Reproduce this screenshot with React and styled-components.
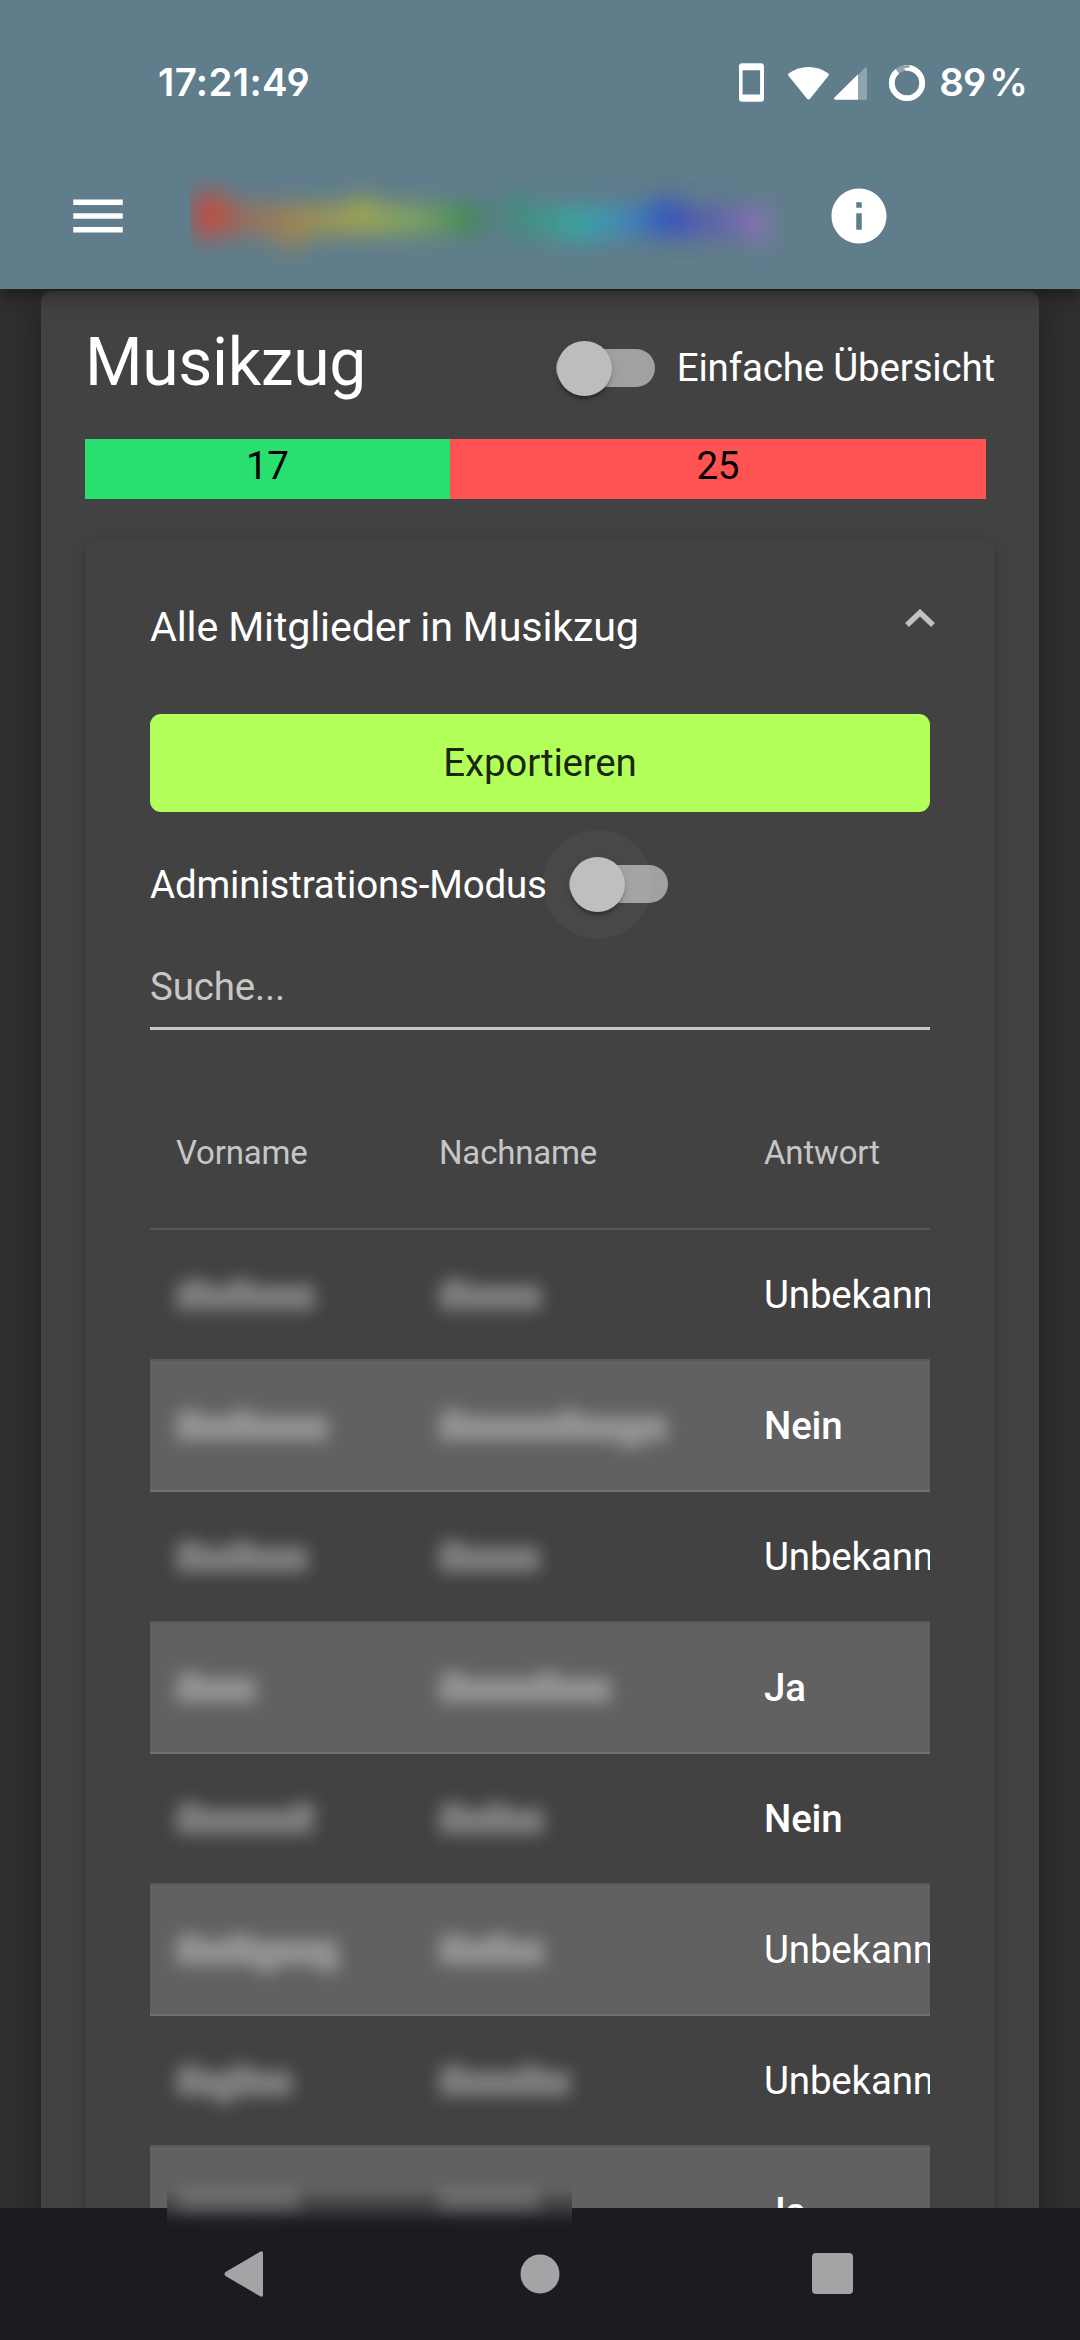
import React from "react";
import styled, { createGlobalStyle, css } from "styled-components";

const GlobalStyle = createGlobalStyle`
  * { box-sizing: border-box; }
  html, body { margin: 0; padding: 0; background: #303030; }
  body { font-family: Roboto, "Noto Sans", sans-serif; color: #fff; letter-spacing: -0.17px; }
`;

const Screen = styled.div`
  width: 1080px;
  height: 2340px;
  display: flex;
  flex-direction: column;
  overflow: hidden;
  background: #303030;
`;

const AppBar = styled.header`
  position: relative;
  z-index: 2;
  flex: none;
  height: 289px;
  background: #607d8b;
  box-shadow:
    0 5.5px 11px -2.75px rgba(0, 0, 0, 0.2),
    0 11px 13.75px 0 rgba(0, 0, 0, 0.14),
    0 2.75px 27.5px 0 rgba(0, 0, 0, 0.12);
`;

const StatusBar = styled.div`
  height: 135px;
  padding: 28px 53px 0 158px;
  display: flex;
  align-items: center;
  justify-content: space-between;
`;

const StatusText = styled.span`
  font-family: Inter, Roboto, sans-serif;
  font-size: 38.5px;
  font-weight: 600;
  line-height: 48px;
  letter-spacing: ${(p) => p.$spacing}px;
  word-spacing: -4.5px;
  font-feature-settings: "cv04" 1;
  white-space: pre;
`;

const StatusIcons = styled.div`
  display: flex;
  align-items: center;
`;

const StatusSvg = styled.svg`
  display: block;
  margin-right: 13px;
`;

const Toolbar = styled.div`
  height: 154px;
  padding: 7px 188px 0 65px;
  display: flex;
  align-items: center;
`;

const ToolbarIcon = styled.svg`
  display: block;
  flex: none;
  width: 66px;
  height: 66px;
  fill: #fff;
`;

const BlurredTitle = styled.svg`
  display: block;
  flex: none;
  margin: 0 36px 0 59px;
  width: 600px;
  height: 110px;
`;

const Content = styled.main`
  flex: 1;
  min-height: 0;
  padding: 2px 41px 0;
  overflow: hidden;
`;

const Card = styled.section`
  height: 2100px;
  padding: 0 44px;
  border-radius: 11px;
  background: #424242;
  box-shadow:
    0 13.75px 13.75px -8.25px rgba(0, 0, 0, 0.2),
    0 22px 27.5px 2.75px rgba(0, 0, 0, 0.14),
    0 8.25px 38.5px 5.5px rgba(0, 0, 0, 0.12);
`;

const CardHeader = styled.div`
  height: 148px;
  padding-top: 28px;
  display: flex;
  justify-content: space-between;
  align-items: flex-start;
`;

const Title = styled.h1`
  margin: 0;
  font-size: 66px;
  line-height: 87px;
  font-weight: 400;
  letter-spacing: -0.35px;
`;

const SwitchLabel = styled.label`
  display: flex;
  align-items: center;
  gap: 22px;
  height: 55px;
  font-size: 38.5px;
  line-height: 55px;
  white-space: nowrap;
  ${(p) =>
    p.$offset &&
    css`
      margin-top: ${p.$offset}px;
    `}
`;

const Track = styled.span`
  position: relative;
  flex: none;
  width: 99px;
  height: 38px;
  border-radius: 19px;
  background: #a1a1a1;
`;

const Thumb = styled.span`
  position: absolute;
  left: 1px;
  top: -8px;
  width: 55px;
  height: 55px;
  border-radius: 50%;
  background: #bdbdbd;
  box-shadow:
    0 5.5px 2.75px -2.75px rgba(0, 0, 0, 0.2),
    0 2.75px 2.75px 0 rgba(0, 0, 0, 0.14),
    0 2.75px 8.25px 0 rgba(0, 0, 0, 0.12);
`;

const Ripple = styled.span`
  position: absolute;
  left: -26px;
  top: -35px;
  width: 109px;
  height: 109px;
  border-radius: 50%;
  background: rgba(255, 255, 255, 0.035);
`;

const RatioBar = styled.div`
  display: flex;
  width: 901px;
  height: 60px;
`;

const RatioPart = styled.div`
  flex: ${(p) => p.$count} 0 0;
  background: ${(p) => p.$color};
  color: #000;
  font-size: 38.5px;
  line-height: 54px;
  text-align: center;
`;

const Panel = styled.section`
  height: 1800px;
  margin-top: 41px;
  border-radius: 11px;
  background: #424242;
  box-shadow:
    0 8.25px 2.75px -5.5px rgba(0, 0, 0, 0.2),
    0 5.5px 5.5px 0 rgba(0, 0, 0, 0.14),
    0 2.75px 13.75px 0 rgba(0, 0, 0, 0.12);
`;

const PanelHeader = styled.div`
  height: 174px;
  padding: 0 60px 0 65px;
  display: flex;
  justify-content: space-between;
  align-items: center;
  font-size: 41.25px;
`;

const Chevron = styled.svg`
  display: block;
  margin-bottom: 18px;
`;

const PanelBody = styled.div`
  padding: 0 65px;
`;

const ExportButton = styled.button`
  display: block;
  width: 100%;
  height: 98px;
  padding: 0;
  border: 0;
  border-radius: 11px;
  background: #b2ff59;
  color: rgba(0, 0, 0, 0.87);
  font: 400 38.5px/98px Roboto, sans-serif;
  letter-spacing: inherit;
`;

const AdminRow = styled.div`
  height: 110px;
  margin-top: 17px;
  display: flex;
  align-items: center;
`;

const SearchField = styled.div`
  height: 91px;
  padding-top: 20px;
  border-bottom: 3px solid #c6c6c6;
  color: #c6c6c6;
  font-size: 38.5px;
  line-height: 56px;
`;

const Table = styled.div`
  margin-top: 46px;
  overflow: hidden;
`;

const Row = styled.div`
  display: grid;
  grid-template-columns: 263px 325px 1fr;
  align-items: center;
  height: 131px;
  padding-left: 26px;
  border-bottom: 2px solid ${(p) => (p.$alt ? "#717171" : "#585858")};
  background: ${(p) => (p.$alt ? "#616161" : "transparent")};
`;

const HeadRow = styled(Row)`
  height: 154px;
  color: #c6c6c6;
  font-size: 33px;
`;

const Answer = styled.span`
  min-width: 0;
  font-size: 38.5px;
  font-weight: ${(p) => (p.$strong ? 500 : 400)};
  white-space: nowrap;
`;

const BlurredSvg = styled.svg`
  display: block;
  overflow: visible;
`;

const NavBar = styled.nav`
  position: relative;
  z-index: 2;
  flex: none;
  height: 132px;
  padding: 0 223px;
  display: flex;
  align-items: center;
  justify-content: space-between;
  background: #1c1b20;
`;

const EdgeSmudge = styled.svg`
  position: absolute;
  left: 167px;
  top: -30px;
`;

/* Unreadable name: a soft band with optional lumps above (up) and below (down). */
function BlurredName({ width, up = [], down = [] }) {
  return (
    <BlurredSvg width={width} height="60" fill="#fff">
      <g filter="url(#soft)" opacity="0.31">
        <rect x="0" y="20" width={width} height="25" rx="4" />
        {up.map((x) => (
          <rect key={"u" + x} x={x - 11} y="14" width="22" height="16" />
        ))}
        {down.map((x) => (
          <rect key={"d" + x} x={x - 11} y="40" width="22" height="12" />
        ))}
      </g>
    </BlurredSvg>
  );
}

function Switch({ ripple }) {
  return (
    <Track>
      <Thumb />
      {ripple && <Ripple />}
    </Track>
  );
}

const rows = [
  { first: { width: 139, up: [20, 65] }, last: { width: 102, up: [16] }, answer: "Unbekannt" },
  { first: { width: 152, up: [14, 66] }, last: { width: 228, up: [14, 130], down: [192] }, answer: "Nein" },
  { first: { width: 132, up: [14, 66] }, last: { width: 101, up: [14] }, answer: "Unbekannt" },
  { first: { width: 80, up: [14] }, last: { width: 172, up: [14, 108] }, answer: "Ja" },
  { first: { width: 137, up: [14, 128] }, last: { width: 105, up: [14, 58] }, answer: "Nein" },
  { first: { width: 162, up: [14, 64], down: [90, 152] }, last: { width: 105, up: [14, 58] }, answer: "Unbekannt" },
  { first: { width: 116, up: [14, 66], down: [48] }, last: { width: 131, up: [14, 92] }, answer: "Unbekannt" },
  { answer: "Ja" },
];

const titleStops = [
  ["0.02", "#c8453c"],
  ["0.1", "#b06a48"],
  ["0.19", "#b8923c"],
  ["0.29", "#b4b43c"],
  ["0.37", "#8cb450"],
  ["0.48", "#2f8a48"],
  ["0.56", "#329a80"],
  ["0.65", "#2fb0a8"],
  ["0.71", "#2f98cc"],
  ["0.8", "#3048c8"],
  ["0.88", "#6058b8"],
  ["0.96", "#9a74b8"],
];

function TitleBlur() {
  return (
    <BlurredTitle viewBox="0 0 600 110">
      <defs>
        <linearGradient id="rainbow" gradientUnits="userSpaceOnUse" x1="0" x2="600" y1="0" y2="0">
          {titleStops.map(([offset, color]) => (
            <stop key={offset} offset={offset} stopColor={color} />
          ))}
        </linearGradient>
        <filter id="softTitle" x="-10%" y="-50%" width="120%" height="200%">
          <feGaussianBlur stdDeviation="11" />
        </filter>
      </defs>
      <g filter="url(#softTitle)" fill="url(#rainbow)" opacity="0.9">
        <rect x="4" y="32" width="34" height="44" />
        <rect x="38" y="43" width="254" height="31" opacity="0.75" />
        <rect x="84" y="64" width="34" height="26" opacity="0.5" />
        <rect x="158" y="34" width="26" height="22" opacity="0.55" />
        <rect x="268" y="44" width="22" height="28" opacity="0.6" />
        <rect x="310" y="36" width="36" height="40" opacity="0.62" />
        <rect x="346" y="45" width="230" height="31" opacity="0.77" />
        <rect x="366" y="52" width="42" height="32" opacity="0.5" />
        <rect x="460" y="36" width="32" height="36" opacity="0.7" />
        <rect x="554" y="46" width="26" height="38" opacity="0.6" />
      </g>
    </BlurredTitle>
  );
}

export default function App() {
  return (
    <Screen>
      <GlobalStyle />
      <AppBar>
        <StatusBar>
          <StatusText $spacing={0.35}>17:21:49</StatusText>
          <StatusIcons>
            <StatusSvg width="188" height="40" viewBox="738 62 188 40">
              <path
                fill="#fff"
                fillRule="evenodd"
                d="M742 63.3h19a3 3 0 0 1 3 3v32.4a3 3 0 0 1-3 3h-19a3 3 0 0 1-3-3V66.300a3 3 0 0 1 3-3ZM742.600 70.300v24.200h17.500V70.300Z"
              />
              <path
                fill="#fff"
                d="M788.500 75.800Q787.500 74.300 789 73.200C795 69 801.500 67 808.500 67s13.500 2 19.500 6.200q1.500 1.100.5 2.600L810 98.800q-1.500 1.600-3 0Z"
              />
              <path fill="#fff" fillOpacity="0.3" d="M865 67.500q2-1 2 1.300V98.500q0 1.300-1.300 1.300H858V75Z" />
              <path fill="#fff" d="M858 74.300v25.500H835.500q-2.500-.3-1-2.200Z" />
              <circle cx="907" cy="83" r="15.200" fill="none" stroke="#fff" strokeOpacity="0.3" strokeWidth="5.800" />
              <circle
                cx="907"
                cy="83"
                r="15.200"
                fill="none"
                stroke="#fff"
                strokeWidth="5.800"
                pathLength="100"
                strokeDasharray="89 11"
                transform="rotate(-90 907 83)"
              />
            </StatusSvg>
            <StatusText $spacing={-1}>89 %</StatusText>
          </StatusIcons>
        </StatusBar>
        <Toolbar>
          <ToolbarIcon viewBox="0 0 24 24">
            <path d="M3 18h18v-2H3v2zm0-5h18v-2H3v2zm0-7v2h18V6H3z" />
          </ToolbarIcon>
          <TitleBlur />
          <ToolbarIcon viewBox="0 0 24 24">
            <path d="M12 2C6.480 2 2 6.480 2 12s4.480 10 10 10 10-4.480 10-10S17.520 2 12 2zm1 15h-2v-6h2v6zm0-8h-2V7h2v2z" />
          </ToolbarIcon>
        </Toolbar>
      </AppBar>

      <Content>
        <Card>
          <CardHeader>
            <Title>Musikzug</Title>
            <SwitchLabel $offset={21}>
              <Switch />
              Einfache Übersicht
            </SwitchLabel>
          </CardHeader>
          <RatioBar>
            <RatioPart $count={17} $color="#28df70">17</RatioPart>
            <RatioPart $count={25} $color="#ff5252">25</RatioPart>
          </RatioBar>

          <Panel>
            <PanelHeader>
              <span>Alle Mitglieder in Musikzug</span>
              <Chevron width="30" height="18" viewBox="0 0 30 18" fill="none" stroke="#c1c1c1" strokeWidth="5.500">
                <path d="M2 16 15 3.700 28 16" />
              </Chevron>
            </PanelHeader>
            <PanelBody>
              <ExportButton>Exportieren</ExportButton>
              <AdminRow>
                <SwitchLabel>
                  Administrations-Modus
                  <Switch ripple />
                </SwitchLabel>
              </AdminRow>
              <SearchField>Suche...</SearchField>
              <Table>
                <HeadRow>
                  <span>Vorname</span>
                  <span>Nachname</span>
                  <span>Antwort</span>
                </HeadRow>
                {rows.map((row, i) => (
                  <Row key={i} $alt={i % 2 === 1}>
                    {row.first ? <BlurredName {...row.first} /> : <span />}
                    {row.last ? <BlurredName {...row.last} /> : <span />}
                    <Answer $strong={row.answer !== "Unbekannt"}>{row.answer}</Answer>
                  </Row>
                ))}
              </Table>
            </PanelBody>
          </Panel>
        </Card>
      </Content>

      <NavBar>
        <EdgeSmudge width="405" height="50">
          <defs>
            <filter id="soft" x="-30%" y="-80%" width="160%" height="260%">
              <feGaussianBlur stdDeviation="8" />
            </filter>
            <linearGradient id="edge" x1="0" x2="0" y1="0" y2="1">
              <stop offset="0" stopColor="#616161" />
              <stop offset="0.240" stopColor="#5d5d5d" />
              <stop offset="0.580" stopColor="#3f3f42" />
              <stop offset="0.860" stopColor="#212025" />
              <stop offset="1" stopColor="#1c1b20" />
            </linearGradient>
          </defs>
          <rect width="405" height="50" fill="url(#edge)" />
          <g filter="url(#soft)" fill="#fff" fillOpacity="0.170">
            <rect x="10" y="12" width="122" height="21" />
            <rect x="272" y="12" width="100" height="21" />
          </g>
        </EdgeSmudge>
        <svg width="45" height="48" viewBox="0 0 45 48" fill="#a4a4a6">
          <path d="M2.500 22 37.500 1.500Q40 .5 40 3v42q0 2.500-2.500 1.500L2.500 26Q.5 24 2.500 22Z" />
        </svg>
        <svg width="40" height="40" viewBox="0 0 40 40" fill="#a4a4a6">
          <circle cx="20" cy="20" r="19.500" />
        </svg>
        <svg width="45" height="42" viewBox="0 0 45 42" fill="#a4a4a6">
          <rect x="0" y="0" width="41" height="41" rx="4" />
        </svg>
      </NavBar>
    </Screen>
  );
}
